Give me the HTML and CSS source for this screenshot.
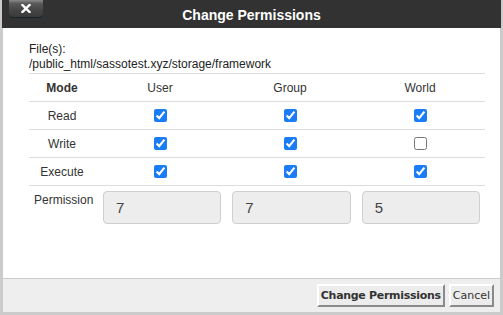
FILE: index.html
```html
<!DOCTYPE html>
<html>
<head>
<meta charset="utf-8">
<link rel="stylesheet" href="styles.css">
</head>
<body>
<div class="dialog">
  <div class="titlebar">
    <button class="close" aria-label="Close">
      <svg width="10" height="9" viewBox="0 0 10 9"><path d="M1.5 1 L8.5 8 M8.5 1 L1.5 8" stroke="#fff" stroke-width="2.4" stroke-linecap="square"/></svg>
    </button>
    <div class="title">Change Permissions</div>
  </div>
  <div class="content">
    <div class="files">File(s):<br>/public_html/sassotest.xyz/storage/framework</div>
    <div class="perm-table">
      <div class="row head">
        <div class="cell mode">Mode</div>
        <div class="cell">User</div>
        <div class="cell">Group</div>
        <div class="cell">World</div>
      </div>
      <div class="row">
        <div class="cell">Read</div>
        <div class="cell"><input type="checkbox" checked></div>
        <div class="cell"><input type="checkbox" checked></div>
        <div class="cell"><input type="checkbox" checked></div>
      </div>
      <div class="row">
        <div class="cell">Write</div>
        <div class="cell"><input type="checkbox" checked></div>
        <div class="cell"><input type="checkbox" checked></div>
        <div class="cell"><input type="checkbox"></div>
      </div>
      <div class="row">
        <div class="cell">Execute</div>
        <div class="cell"><input type="checkbox" checked></div>
        <div class="cell"><input type="checkbox" checked></div>
        <div class="cell"><input type="checkbox" checked></div>
      </div>
    </div>
    <div class="perm-row">
      <div class="perm-label">Permission</div>
      <input class="perm-input" type="text" value="7" readonly>
      <input class="perm-input" type="text" value="7" readonly>
      <input class="perm-input" type="text" value="5" readonly>
    </div>
  </div>
  <div class="footer">
    <button class="btn primary">Change Permissions</button>
    <button class="btn">Cancel</button>
  </div>
</div>
</body>
</html>
```
FILE: styles.css
```css
html, body {
  margin: 0;
  padding: 0;
  background: #fff;
}
body {
  width: 503px;
  height: 315px;
  overflow: hidden;
  font-family: "Liberation Sans", Arial, Helvetica, sans-serif;
  font-size: 12px;
  color: #333;
}
.dialog {
  box-sizing: border-box;
  width: 503px;
  height: 315px;
  border: 3px solid #cbcbcb;
  border-top: 0;
  display: flex;
  flex-direction: column;
  background: #fff;
}
.titlebar {
  height: 28px;
  margin: 0 -1px;
  background: #323232;
  display: flex;
  align-items: center;
  justify-content: center;
  position: relative;
}
.close {
  position: absolute;
  left: 7px;
  top: 0;
  width: 34px;
  height: 18px;
  padding: 0;
  border: 0;
  border-bottom: 1px solid #15242c;
  border-radius: 0 0 4px 4px;
  background: linear-gradient(#8a8a8a 0%, #5a5a5a 20%, #454545 60%, #3a3a3a 100%);
  display: flex;
  align-items: center;
  justify-content: center;
}
.title {
  color: #fff;
  font-weight: bold;
  font-size: 14px;
  padding-top: 1px;
}
.content {
  flex: 1;
  padding: 14px 15px 0 26px;
}
.files {
  line-height: 15px;
  font-size: 12px;
  color: #222;
}
.perm-table {
  margin-top: 1px;
  border-top: 1px solid #dcdcdc;
}
.row {
  display: grid;
  grid-template-columns: 66px repeat(3, 130px);
  height: 27px;
  border-bottom: 1px solid #dcdcdc;
}
.cell {
  display: flex;
  align-items: center;
  justify-content: center;
}
.head .mode {
  font-weight: bold;
}
.cell input[type="checkbox"] {
  width: 13px;
  height: 13px;
  margin: 0;
  accent-color: #1a7cf6;
}
.perm-row {
  display: grid;
  grid-template-columns: 63px repeat(3, minmax(0, 1fr));
  column-gap: 11px;
  margin-top: 5px;
  padding-right: 5px;
}
.perm-label {
  padding-left: 5px;
  padding-top: 2px;
  line-height: 15px;
}
.perm-input {
  box-sizing: border-box;
  width: 100%;
  min-width: 0;
  height: 33px;
  margin: 0;
  border: 1px solid #cfcfcf;
  border-radius: 4px;
  background: #ededed;
  padding: 0 12px;
  font-family: "Liberation Sans", Arial, sans-serif;
  font-size: 15px;
  color: #444;
  outline: none;
}
.footer {
  height: 33px;
  border-top: 1px solid #cbcbcb;
  background: #eeeeee;
  display: flex;
  align-items: center;
  justify-content: flex-end;
  gap: 4px;
  padding-right: 6px;
}
.btn {
  height: 23px;
  padding: 0 2px;
  margin: 0;
  border: 2px solid;
  border-color: #fff #8a8a8a #8a8a8a #fff;
  background: #ececec;
  font-family: "DejaVu Sans", Verdana, sans-serif;
  font-size: 11px;
  color: #333;
}
.btn.primary {
  font-weight: bold;
  letter-spacing: -0.3px;
}
```
